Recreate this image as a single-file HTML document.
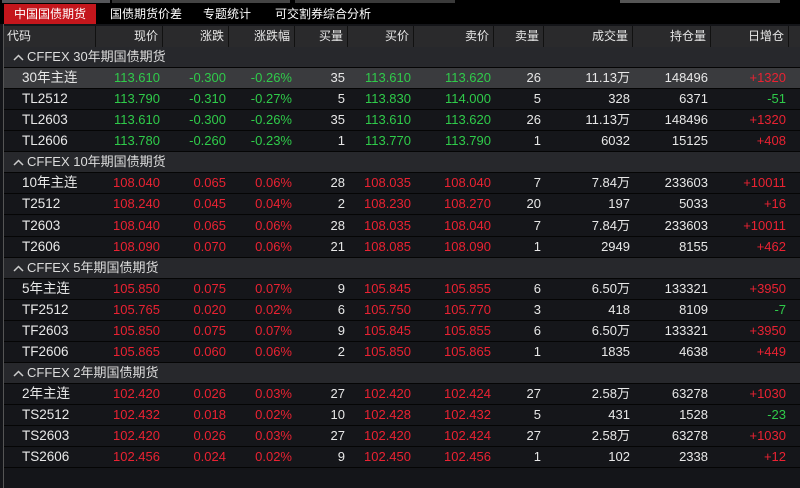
<!DOCTYPE html><html><head><meta charset="utf-8"><style>
*{margin:0;padding:0;box-sizing:border-box}
body{width:800px;height:488px;background:#141519;overflow:hidden;font-family:"Liberation Sans","Noto Sans CJK SC",sans-serif;font-size:13px;color:#e8e8e8;position:relative}
.top{position:absolute;left:0;top:0;width:800px;height:4px;background:#000}
.top i{position:absolute;top:0;height:3px;background:#55565a}
.tabs{position:absolute;left:0;top:4px;width:800px;height:20px;background:#000;font-size:12px}
.tabs span{position:absolute;top:0;height:20px;line-height:20px;color:#fff}
.tabs .a{background:#c4161c;left:4px;width:92px;text-align:center}
.lb{position:absolute;left:3px;top:24px;width:1px;height:464px;background:#555}
.hdr{position:absolute;left:4px;top:26px;width:796px;height:21px;background:#2a2a2c;font-size:12px}
.row{position:absolute;left:4px;width:796px;height:21px;line-height:20px;border-bottom:1px solid #050505;background:#15161a}
.row span,.hdr span{position:absolute;top:0;text-align:right;white-space:nowrap}
.hdr span{line-height:21px;border-right:1px solid #111;padding-right:4px}
.row span{padding-right:3px}
.grp{background:#27282c}
.grp svg{position:absolute;left:9px;top:7px}
.sel{background:#3a3b3e}
.g{color:#2fcb4a}.r{color:#ea2232}
</style></head><body>
<div class="top"><i style="left:2px;width:108px"></i><i style="left:112px;width:18px;background:#333"></i><i style="left:130px;width:160px;background:#444"></i><i style="left:295px;width:160px;background:#3a3a3a"></i><i style="left:620px;width:160px;background:#555"></i></div>
<div class="tabs"><span class="a">中国国债期货</span><span style="left:110px">国债期货价差</span><span style="left:203px">专题统计</span><span style="left:275px">可交割券综合分析</span></div>
<div class="lb"></div>
<div class="hdr">
<span style="left:0;width:92px;text-align:left;padding-left:3px">代码</span>
<span style="left:92px;width:67px">现价</span>
<span style="left:159px;width:66px">涨跌</span>
<span style="left:225px;width:66px">涨跌幅</span>
<span style="left:291px;width:53px">买量</span>
<span style="left:344px;width:66px">买价</span>
<span style="left:410px;width:80px">卖价</span>
<span style="left:490px;width:50px">卖量</span>
<span style="left:540px;width:89px">成交量</span>
<span style="left:629px;width:78px">持仓量</span>
<span style="left:707px;width:78px">日增仓</span>
</div>
<div id="t"></div>
<script>
const groups=[["CFFEX 30年期国债期货",[["30年主连","113.610","-0.300","-0.26%","35","113.610","113.620","26","11.13万","148496","+1320"],["TL2512","113.790","-0.310","-0.27%","5","113.830","114.000","5","328","6371","-51"],["TL2603","113.610","-0.300","-0.26%","35","113.610","113.620","26","11.13万","148496","+1320"],["TL2606","113.780","-0.260","-0.23%","1","113.770","113.790","1","6032","15125","+408"]]],
["CFFEX 10年期国债期货",[["10年主连","108.040","0.065","0.06%","28","108.035","108.040","7","7.84万","233603","+10011"],["T2512","108.240","0.045","0.04%","2","108.230","108.270","20","197","5033","+16"],["T2603","108.040","0.065","0.06%","28","108.035","108.040","7","7.84万","233603","+10011"],["T2606","108.090","0.070","0.06%","21","108.085","108.090","1","2949","8155","+462"]]],
["CFFEX 5年期国债期货",[["5年主连","105.850","0.075","0.07%","9","105.845","105.855","6","6.50万","133321","+3950"],["TF2512","105.765","0.020","0.02%","6","105.750","105.770","3","418","8109","-7"],["TF2603","105.850","0.075","0.07%","9","105.845","105.855","6","6.50万","133321","+3950"],["TF2606","105.865","0.060","0.06%","2","105.850","105.865","1","1835","4638","+449"]]],
["CFFEX 2年期国债期货",[["2年主连","102.420","0.026","0.03%","27","102.420","102.424","27","2.58万","63278","+1030"],["TS2512","102.432","0.018","0.02%","10","102.428","102.432","5","431","1528","-23"],["TS2603","102.420","0.026","0.03%","27","102.420","102.424","27","2.58万","63278","+1030"],["TS2606","102.456","0.024","0.02%","9","102.450","102.456","1","102","2338","+12"]]]];
const cols=[[92,67],[159,66],[225,66],[291,53],[344,66],[410,80],[490,50],[540,89],[629,78],[707,78]];
let h="",y=47,first=true;
for(const [name,rows] of groups){
h+=`<div class="row grp" style="top:${Math.round(y)}px"><svg width="11" height="7"><path d="M1 6L5.5 1.5L10 6" stroke="#ccc" stroke-width="1.5" fill="none"/></svg><span style="left:23px;text-align:left;color:#ddd">${name}</span></div>`;y+=21.07;
for(const r of rows){
const c=r[1].startsWith("113")?"g":"r";
const dc=r[10][0]=="+"?"r":"g";
h+=`<div class="row${first?" sel":""}" style="top:${Math.round(y)}px"><span style="left:18px;text-align:left;font-size:13.5px">${r[0]}</span>`;
first=false;
const cls=[c,c,c,"",c,c,"","","",dc];
cols.forEach(([l,w],i)=>{h+=`<span class="${cls[i]}" style="left:${l}px;width:${w}px">${r[i+1]}</span>`});
h+="</div>";y+=21.07;}
}
document.getElementById("t").innerHTML=h;
</script>
</body></html>
